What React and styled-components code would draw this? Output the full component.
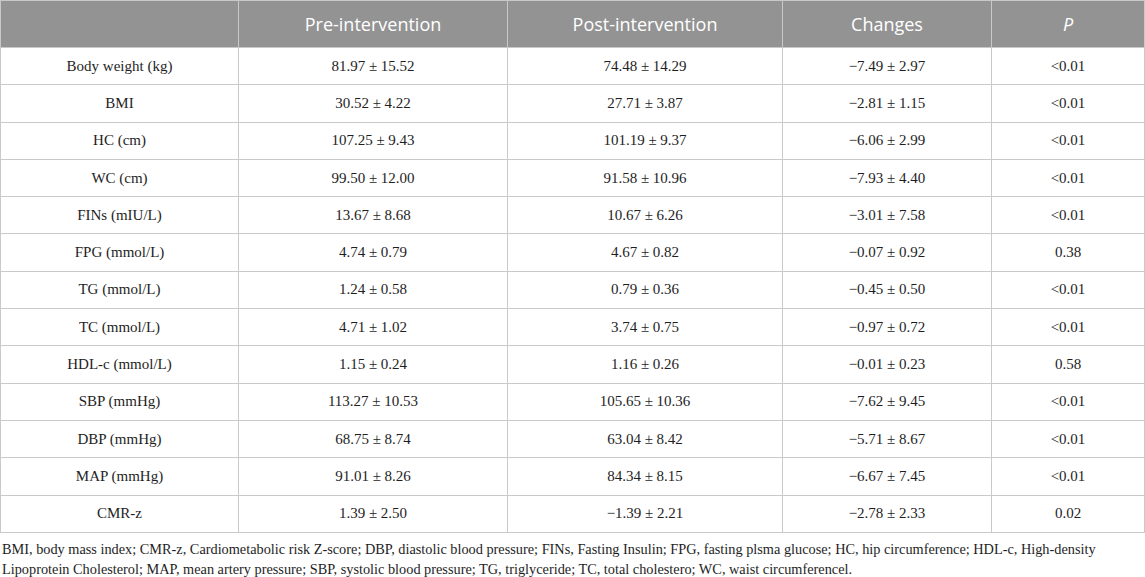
import * as React from 'react'
import styled, { createGlobalStyle } from 'styled-components'

const GlobalStyle = createGlobalStyle`
  body {
    margin: 0;
    background: #ffffff;
  }
`

const rows = [
  ['Body weight (kg)', '81.97 ± 15.52', '74.48 ± 14.29', '−7.49 ± 2.97', '<0.01'],
  ['BMI', '30.52 ± 4.22', '27.71 ± 3.87', '−2.81 ± 1.15', '<0.01'],
  ['HC (cm)', '107.25 ± 9.43', '101.19 ± 9.37', '−6.06 ± 2.99', '<0.01'],
  ['WC (cm)', '99.50 ± 12.00', '91.58 ± 10.96', '−7.93 ± 4.40', '<0.01'],
  ['FINs (mIU/L)', '13.67 ± 8.68', '10.67 ± 6.26', '−3.01 ± 7.58', '<0.01'],
  ['FPG (mmol/L)', '4.74 ± 0.79', '4.67 ± 0.82', '−0.07 ± 0.92', '0.38'],
  ['TG (mmol/L)', '1.24 ± 0.58', '0.79 ± 0.36', '−0.45 ± 0.50', '<0.01'],
  ['TC (mmol/L)', '4.71 ± 1.02', '3.74 ± 0.75', '−0.97 ± 0.72', '<0.01'],
  ['HDL-c (mmol/L)', '1.15 ± 0.24', '1.16 ± 0.26', '−0.01 ± 0.23', '0.58'],
  ['SBP (mmHg)', '113.27 ± 10.53', '105.65 ± 10.36', '−7.62 ± 9.45', '<0.01'],
  ['DBP (mmHg)', '68.75 ± 8.74', '63.04 ± 8.42', '−5.71 ± 8.67', '<0.01'],
  ['MAP (mmHg)', '91.01 ± 8.26', '84.34 ± 8.15', '−6.67 ± 7.45', '<0.01'],
  ['CMR-z', '1.39 ± 2.50', '−1.39 ± 2.21', '−2.78 ± 2.33', '0.02'],
]

const widths = [238, 269, 275, 209, 153]

const Wrapper = styled.div`
  width: 1145px;
`

const Table = styled.table`
  width: 1144px;
  border-collapse: collapse;
  table-layout: fixed;
`

const HeadCell = styled.th`
  height: 46px;
  padding: 0;
  background: #939393;
  color: #ffffff;
  font-family: 'Open Sans', 'Noto Sans', sans-serif;
  font-size: 18px;
  font-weight: 400;
  font-style: ${(p) => (p.italic ? 'italic' : 'normal')};
  text-align: center;
  border: 1px solid #c9c9c9;
`

const Cell = styled.td`
  height: 36.3px;
  padding: 0;
  text-align: center;
  color: #1e1e1e;
  font-family: 'Liberation Serif', 'Times New Roman', serif;
  font-size: 15px;
  border: 1px solid #c9c9c9;
`

const Note = styled.p`
  margin: 0;
  padding: 6px 30px 0 2px;
  color: #1e1e1e;
  font-family: 'Liberation Serif', 'Times New Roman', serif;
  font-size: 14.3px;
  line-height: 20px;
`

const NoBreak = styled.span`
  white-space: nowrap;
`

export default function App() {
  return (
    <Wrapper>
      <GlobalStyle />
      <Table>
        <colgroup>
          {widths.map((w, i) => (
            <col key={i} style={{ width: w }} />
          ))}
        </colgroup>
        <thead>
          <tr>
            <HeadCell />
            <HeadCell>Pre-intervention</HeadCell>
            <HeadCell>Post-intervention</HeadCell>
            <HeadCell>Changes</HeadCell>
            <HeadCell italic>P</HeadCell>
          </tr>
        </thead>
        <tbody>
          {rows.map((r) => (
            <tr key={r[0]}>
              {r.map((c, i) => (
                <Cell key={i}>{c}</Cell>
              ))}
            </tr>
          ))}
        </tbody>
      </Table>
      <Note>
        BMI, body mass index; CMR-z, Cardiometabolic risk Z-score; DBP, diastolic blood pressure; FINs, Fasting
        Insulin; FPG, fasting plsma glucose; HC, hip circumference; HDL-c, <NoBreak>High-density</NoBreak>{' '}
        Lipoprotein Cholesterol; MAP, mean artery pressure; SBP, systolic blood pressure; TG, triglyceride; TC,
        total cholestero; WC, waist circumferencel.
      </Note>
    </Wrapper>
  )
}
